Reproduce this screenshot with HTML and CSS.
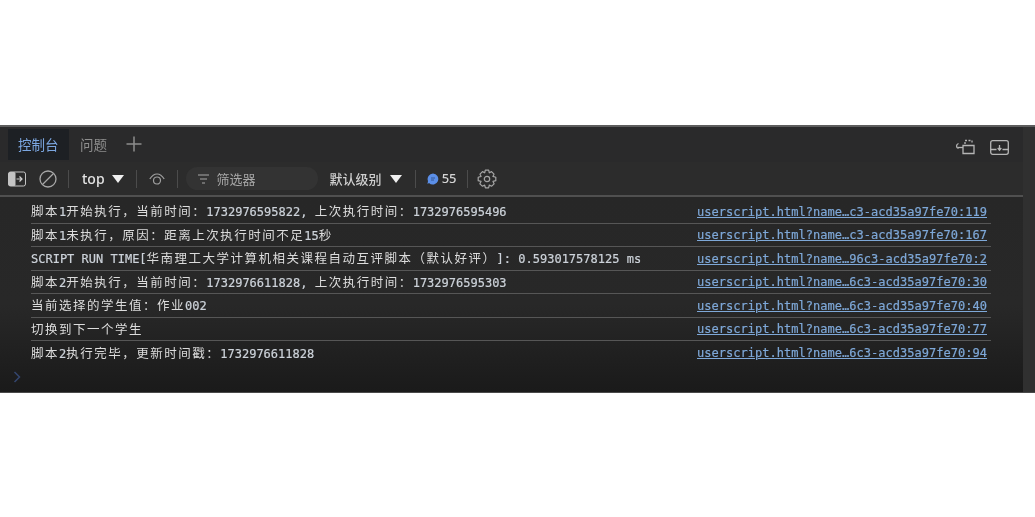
FILE: index.html
```html
<!DOCTYPE html>
<html lang="zh">
<head>
<meta charset="utf-8">
<title>控制台</title>
<link rel="stylesheet" href="styles.css">
</head>
<body>
<main class="panel">
  <div class="main">
    <header class="tabbar">
      <div class="tab active">控制台</div>
      <div class="tab">问题</div>
      <svg class="plus" width="18" height="18" viewBox="0 0 18 18"><path d="M9 1.500V16.500M1.500 9H16.500" stroke="#8d8d8d" stroke-width="1.500" fill="none"/></svg>
      <div class="spacer"></div>
      <svg class="ticon" width="20" height="18" viewBox="0 0 20 18" fill="none" stroke="#b5b5b5" stroke-width="1.300"><path d="M8 7.500H19V15.500H8Z"/><path d="M10 6V2.500H17V6" stroke-dasharray="2 1.500"/><path d="M3.500 5.500C1 6.500 0.800 9.500 3.500 10.500"/><path d="M3 9.500H8"/></svg>
      <svg class="ticon last" width="19" height="15" viewBox="0 0 19 15" fill="none" stroke="#b5b5b5" stroke-width="1.300"><rect x="0.700" y="0.700" width="17.600" height="13.600" rx="2"/><path d="M0.700 9.500H6.500M12.500 9.500H18.300M9.500 5V9.800M7.700 8L9.500 10.200L11.300 8"/></svg>
    </header>
    <div class="toolbar">
      <svg class="first" width="18" height="16" viewBox="0 0 18 16"><rect x="0.500" y="1" width="17" height="14" rx="2" fill="#2b2b2b" stroke="#c4c4c4"/><rect x="0.500" y="1" width="7" height="14" rx="1.500" fill="#c4c4c4"/><path d="M8.500 8H14M11.500 5.500L14 8L11.500 10.500" stroke="#d0d0d0" stroke-width="1.200" fill="none"/></svg>
      <svg class="clear" width="18" height="18" viewBox="0 0 18 18" fill="none" stroke="#a8a8a8" stroke-width="1.300"><circle cx="9" cy="9" r="8"/><path d="M3.500 14.500L14.500 3.500"/></svg>
      <span class="sep s1"></span>
      <span class="ctx">top</span>
      <span class="caret"></span>
      <span class="sep"></span>
      <svg class="eye" width="16" height="12" viewBox="0 0 16 12" fill="none" stroke="#a0a0a0" stroke-width="1.200"><path d="M0.800 6C3 2.500 5.500 1 8 1S13 2.500 15.200 6"/><path d="M4.500 7.500A3.500 3.500 0 0 1 11.500 7.500A3.500 3.500 0 0 1 4.500 7.500Z"/></svg>
      <span class="sep s3"></span>
      <div class="filter">
        <svg width="11" height="10" viewBox="0 0 11 10" stroke="#a8a8a8" stroke-width="1.200"><path d="M0 1H11M2 5H9M4 9H7"/></svg>
        <span>筛选器</span>
      </div>
      <span class="level">默认级别</span>
      <span class="caret"></span>
      <span class="sep s4"></span>
      <svg class="msg" width="12" height="12" viewBox="0 0 12 12"><path d="M6 0.500A5.500 5.500 0 1 1 2 10L0.500 11L1 8A5.500 5.500 0 0 1 6 0.500Z" fill="#5b8fe8"/><path d="M4 5H8M4 7H7" stroke="#2b4a80" stroke-width="0.800"/></svg>
      <span class="count">55</span>
      <span class="sep s5"></span>
      <svg class="gear" width="20" height="20" viewBox="0 0 20 20" fill="none" stroke="#a5a5a5" stroke-width="1.200"><circle cx="10" cy="10" r="2.700"/><path d="M8.300 1.200H11.700L12.300 3.800L14.500 2.600L17 5.200L15.900 7.400L18.800 8.300V11.700L16 12.400L17.100 14.800L14.700 17.200L12.300 16.100L11.600 18.800H8.400L7.700 16.100L5.300 17.200L2.900 14.800L4 12.400L1.200 11.700V8.300L4.100 7.400L3 5.200L5.500 2.600L7.700 3.800Z" stroke-linejoin="round"/></svg>
    </div>
    <section class="log">
      <div class="row"><span class="msgtext"><i>脚本</i>1<i>开始执行，当前时间：</i>1732976595822, <i>上次执行时间：</i>1732976595496</span><a class="src">userscript.html?name…c3-acd35a97fe70:119</a></div>
      <div class="row"><span class="msgtext"><i>脚本</i>1<i>未执行，原因：距离上次执行时间不足</i>15<i>秒</i></span><a class="src">userscript.html?name…c3-acd35a97fe70:167</a></div>
      <div class="row"><span class="msgtext">SCRIPT RUN TIME[<i>华南理工大学计算机相关课程自动互评脚本（默认好评）</i>]: 0.593017578125 ms</span><a class="src">userscript.html?name…96c3-acd35a97fe70:2</a></div>
      <div class="row"><span class="msgtext"><i>脚本</i>2<i>开始执行，当前时间：</i>1732976611828, <i>上次执行时间：</i>1732976595303</span><a class="src">userscript.html?name…6c3-acd35a97fe70:30</a></div>
      <div class="row"><span class="msgtext"><i>当前选择的学生值：作业</i>002</span><a class="src">userscript.html?name…6c3-acd35a97fe70:40</a></div>
      <div class="row"><span class="msgtext"><i>切换到下一个学生</i></span><a class="src">userscript.html?name…6c3-acd35a97fe70:77</a></div>
      <div class="row"><span class="msgtext"><i>脚本</i>2<i>执行完毕，更新时间戳：</i>1732976611828</span><a class="src">userscript.html?name…6c3-acd35a97fe70:94</a></div>
      <svg class="prompt" width="8" height="12" viewBox="0 0 8 12" fill="none" stroke="#34466e" stroke-width="1.500"><path d="M1.500 1L6.500 6L1.500 11"/></svg>
    </section>
  </div>
  <aside class="gutter"></aside>
</main>
</body>
</html>
```
FILE: styles.css
```css
* { box-sizing: border-box; }
html, body { margin: 0; background: #fff; }
body { padding-top: 125px; height: 517px; overflow: hidden; }
.panel {
  display: flex;
  width: 1035px;
  height: 268px;
  background: #2e2e2e;
  border-top: 2px solid #5d5d5d;
  border-bottom: 1px solid #4a4a4a;
  filter: blur(0.35px);
}
.main { flex: 1; min-width: 0; display: flex; flex-direction: column; }
.gutter { width: 12px; background: #303030; }
.tabbar {
  height: 35px;
  padding: 2px 0 0 8px;
  display: flex;
  align-items: flex-start;
  background: #2a2a2b;
  font: 13.500px "Noto Sans CJK SC", sans-serif;
}
.tab {
  height: 31px;
  line-height: 31px;
  padding: 0 10px;
  color: #8e8e8e;
  white-space: nowrap;
}
.tab.active { background: #1d2024; color: #7ba6e0; width: 61px; margin-right: 1px; }
.plus { margin: 6px 0 0 8px; }
.spacer { flex: 1; }
.ticon { margin-top: 9px; margin-right: 15px; }
.ticon.last { margin-top: 11px; margin-right: 14px; }
.toolbar {
  height: 35px;
  display: flex;
  align-items: center;
  padding: 0 0 0 8px;
  background: #2c2c2c;
  border-bottom: 2px solid #505050;
  color: #d8d8d8;
  font: 14px "Noto Sans CJK SC", sans-serif;
}
.clear { margin-left: 13px; }
.sep { width: 1px; height: 18px; background: #4c4c4c; margin: 0 12px; flex: none; }
.sep.s1 { margin: 0 13px 0 11px; }
.sep.s3 { margin-right: 8px; }
.sep.s4 { margin-left: 13px; margin-right: 11px; }
.sep.s5 { margin: 0 9px 0 10px; }
.ctx { font-family: "Noto Sans", sans-serif; font-size: 14px; font-weight: 500; color: #e4e4e4; }
.caret {
  width: 0;
  height: 0;
  margin-left: 7px;
  border-left: 6.500px solid transparent;
  border-right: 6.500px solid transparent;
  border-top: 8px solid #f0f0f0;
}
.filter {
  width: 132px;
  height: 23px;
  padding-left: 12px;
  display: flex;
  align-items: center;
  gap: 8px;
  border-radius: 12px;
  background: #333333;
  color: #a8a8a8;
  font-size: 13px;
}
.level { margin-left: 12px; margin-right: 1px; color: #d0d0d0; font-size: 13px; font-weight: 500; }
.count { margin-left: 3px; margin-top: -2px; font: 500 13px "Noto Sans", sans-serif; color: #d4d4d4; }
.log {
  flex: 1;
  position: relative;
  padding: 3.400px 32px 0 31px;
  background: linear-gradient(#272727 0%, #282828 55%, #1a1a1a 100%);
}
.row {
  height: 23.500px;
  display: flex;
  justify-content: space-between;
  align-items: center;
  padding-right: 4px;
  border-bottom: 1px solid #565656;
  font: 12px/14px "DejaVu Sans Mono", monospace;
  color: #cdd3da;
  white-space: pre;
  -webkit-text-stroke: 0.2px;
}
.row:last-of-type { border-bottom: 0; }
.msgtext i {
  font-style: normal;
  font-family: "Noto Sans CJK SC", sans-serif;
  font-size: 12.500px;
  letter-spacing: 1.500px;
  color: #dcdcdc;
  text-spacing-trim: space-all;
  -webkit-text-stroke: 0;
}
.src { color: #7ea8d8; text-decoration: underline; letter-spacing: 0.025px; }
.prompt { position: absolute; left: 13px; top: 174px; }
```
